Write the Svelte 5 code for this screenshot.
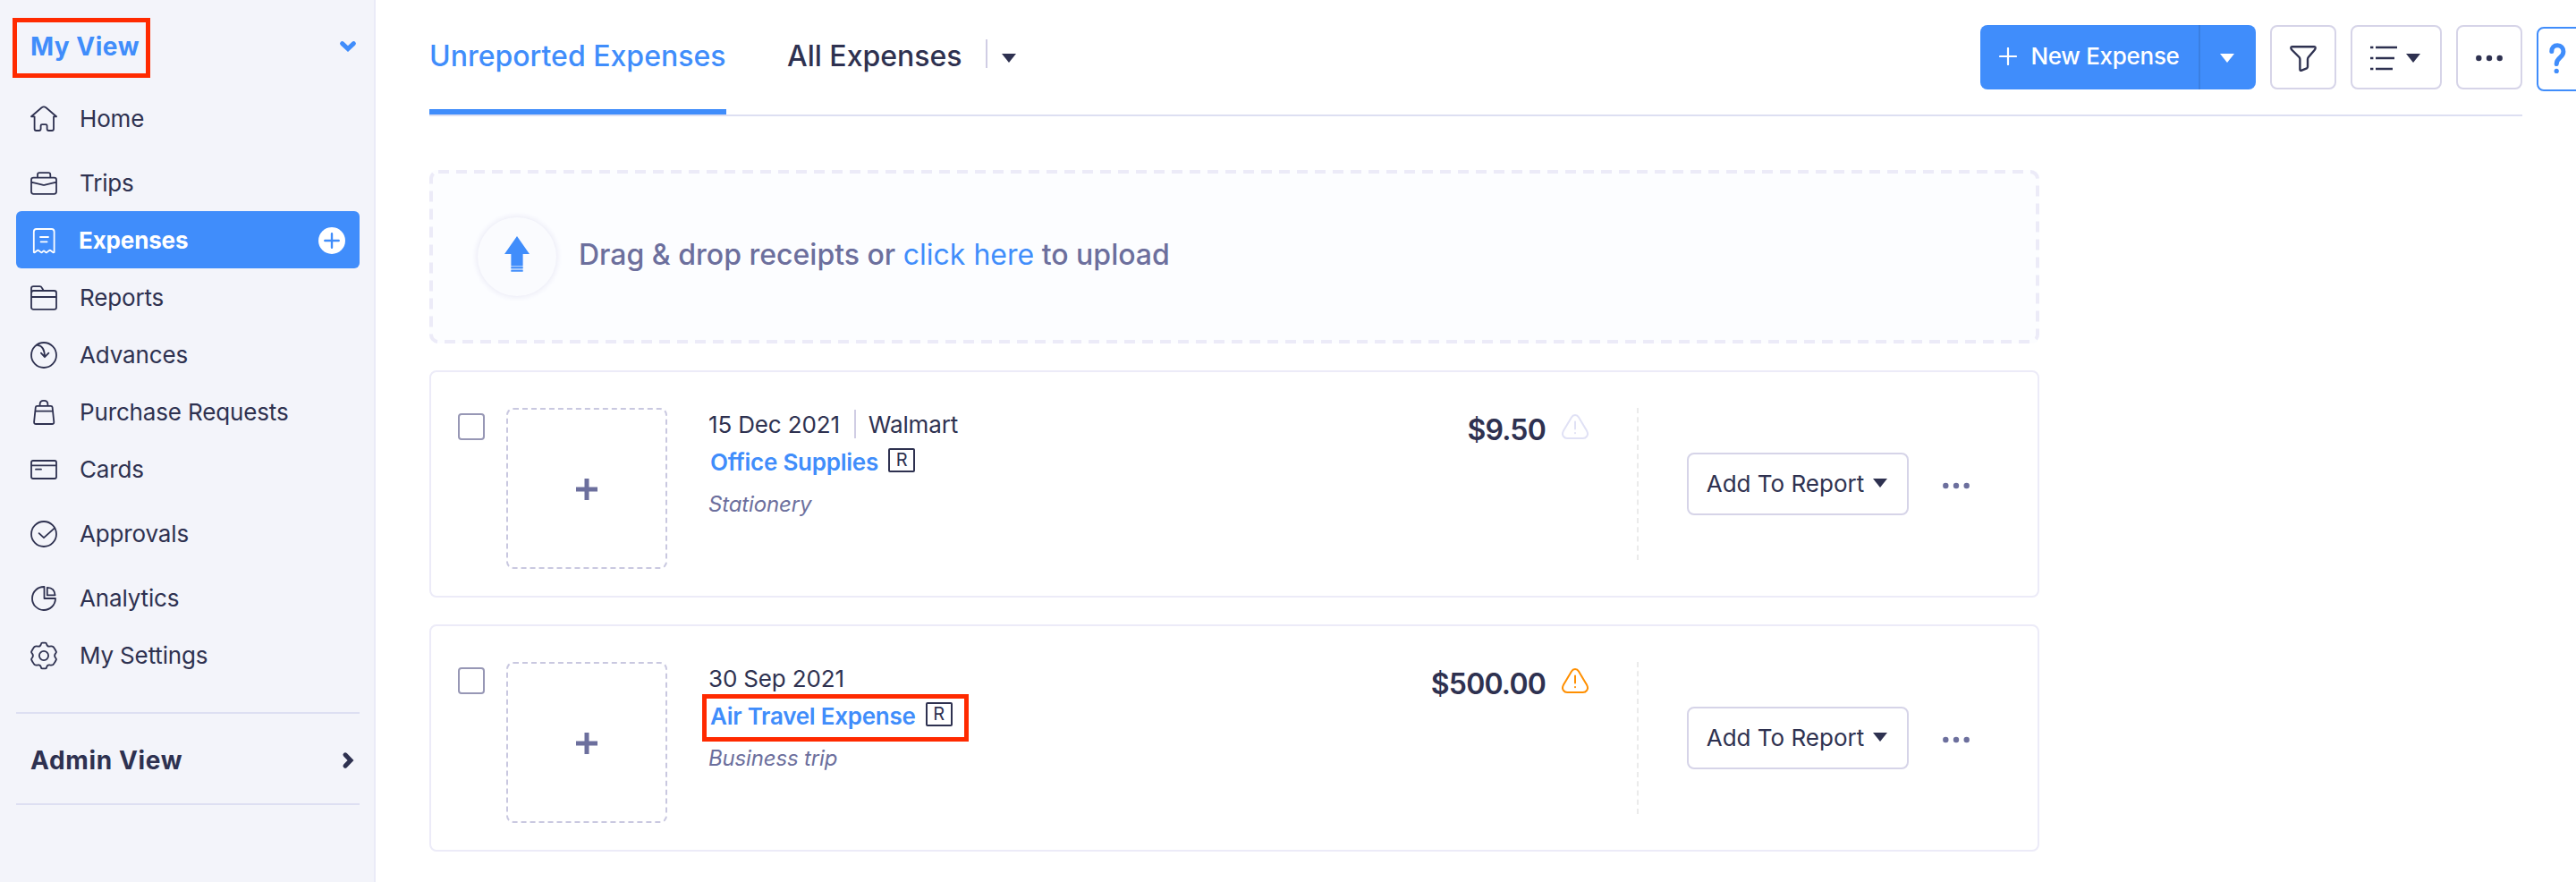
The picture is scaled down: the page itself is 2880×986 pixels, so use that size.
<script>
  const navGroups = [
    [{ label: 'Home', icon: 'M1 13.3L12.6 3.2Q15 1.5 17.4 3.2L29 13.3H26V27Q26 29 24 29H20.5Q18.6 29 18.6 27V23.5Q18.6 22.2 17 22.2H13Q11.6 22.2 11.6 23.5V27Q11.6 29 9.6 29H6.4Q4.6 29 4.6 27V13.3Z' }],
    [
      { label: 'Trips', icon: 'M8 9.5V6.5Q8 4.2 10 4.2H20.3Q22.3 4.2 22.3 6.5V9.5M3.5 9.7H26.5Q29 9.7 29 12V25.3Q29 27.8 26.5 27.8H3.5Q1 27.8 1 25.3V12Q1 9.7 3.5 9.7ZM1 14.7L13.5 17.6Q15 18 16.5 17.6L29 14.7' },
      { label: 'Expenses', active: true, icon: 'M3.8 29V6Q3.8 3 6.8 3H23.6Q26.6 3 26.6 6V29Q25.6 29.6 24.8 28.8L22.8 27.2Q21.8 26.4 20.8 27.2L18.6 28.9Q17.6 29.6 16.8 28.8L15.8 27.8Q15 27 14.2 27.8L13.2 28.8Q12.4 29.6 11.6 28.9L9.4 27.2Q8.4 26.4 7.4 27.2L5.4 28.8Q4.6 29.6 3.8 29ZM11 12H20M11.6 17.3H18.6' },
      { label: 'Reports', icon: 'M1 8V5.4Q1 3.2 3.4 3.2H10.5Q12 3.2 13 5L14.8 8H26.6Q29 8 29 10.4V26.4Q29 28.8 26.6 28.8H3.4Q1 28.8 1 26.4V8ZM1 10.4Q1 8 3.4 8H14.8M1 15H29' },
      { label: 'Advances', icon: 'M29 16A14 14 0 1 1 1 16A14 14 0 1 1 29 16ZM8 4.8C13.5 5.5 16 10.5 16 18M11.9 13.6L16 18.2L20.4 13.6' },
      { label: 'Purchase Requests', icon: 'M10.6 8.8V7Q10.6 2.9 15 2.9T19.4 7V8.8M7.6 8.8H22.8Q24.4 8.8 24.6 10.4L26.3 26.6Q26.5 29 24.2 29H6.2Q3.9 29 4.1 26.6L5.8 10.4Q6 8.8 7.6 8.8ZM5.6 14.7H24.8' },
      { label: 'Cards', icon: 'M3 6H27Q29 6 29 8V24Q29 26 27 26H3Q1 26 1 24V8Q1 6 3 6ZM1 11.4H29M6 15.7H12' }
    ],
    [{ label: 'Approvals', icon: 'M29 16A14 14 0 1 1 1 16A14 14 0 1 1 29 16ZM9.6 15.2L15 20.2L27 9.4' }],
    [
      { label: 'Analytics', icon: 'M15.5 3A13 13 0 1 0 28 16H15.5ZM18.8 3.8Q27.2 4.2 27.6 12.4H18.8Z' },
      { label: 'My Settings', icon: 'M11.9 3Q12.1 1.6 13.4 1.6H16.6Q17.9 1.6 18.1 3Q18.8 6 21.4 5.6Q24 5 25.4 6Q26.4 6.8 27.4 8.8L28.6 11Q29.4 12.4 28.2 13.4Q26 16 28.2 18.6Q29.4 19.6 28.6 21L27.4 23.2Q26.4 25.2 25.4 26Q24 27 21.4 26.4Q18.8 26 18.1 29Q17.9 30.4 16.6 30.4H13.4Q12.1 30.4 11.9 29Q11.2 26 8.6 26.4Q6 27 4.6 26Q3.6 25.2 2.6 23.2L1.4 21Q.6 19.6 1.8 18.6Q4 16 1.8 13.4Q.6 12.4 1.4 11L2.6 8.8Q3.6 6.8 4.6 6Q6 5 8.6 5.6Q11.2 6 11.9 3ZM20.1 16A5.1 5.1 0 1 1 9.9 16A5.1 5.1 0 1 1 20.1 16Z' }
    ]
  ];

  const expenses = [
    { date: '15 Dec 2021', merchant: 'Walmart', category: 'Office Supplies', note: 'Stationery', amount: '$9.50' },
    { date: '30 Sep 2021', category: 'Air Travel Expense', note: 'Business trip', amount: '$500.00', warn: true, marked: true }
  ];
</script>

{#snippet caret()}
  <svg class="caret" width="16" height="10" viewBox="0 0 16 10"><path d="M0 0H16L8 10Z" fill="currentColor" /></svg>
{/snippet}

{#snippet dots()}
  <svg width="30" height="8" viewBox="0 0 30 8" fill="currentColor">
    <circle cx="3.3" cy="4" r="3.2" /><circle cx="15" cy="4" r="3.2" /><circle cx="26.7" cy="4" r="3.2" />
  </svg>
{/snippet}

<div class="app">
  <aside class="sidebar">
    <div class="view-switch">
      <span class="view-name marked">My View</span>
      <svg width="20" height="14" viewBox="0 0 20 14" fill="none" stroke="currentColor" stroke-width="5" stroke-linecap="round"><path d="M3.6 3.6L10 9.6L16.4 3.6" /></svg>
    </div>

    <nav>
      {#each navGroups as group}
        <ul>
          {#each group as item}
            <li class:active={item.active}>
              <svg width="30" height="32" viewBox="0 0 30 32" fill="none" stroke="currentColor" stroke-width="1.8" stroke-linecap="round" stroke-linejoin="round"><path d={item.icon} /></svg>
              <span>{item.label}</span>
              {#if item.active}
                <svg class="add" width="30" height="30" viewBox="0 0 30 30">
                  <circle cx="15" cy="15" r="15" fill="#fff" />
                  <path d="M15 7.3V22.7M7.3 15H22.7" stroke="#408dfb" stroke-width="2.4" stroke-linecap="round" />
                </svg>
              {/if}
            </li>
          {/each}
        </ul>
      {/each}
    </nav>

    <div class="admin-view">
      <span>Admin View</span>
      <svg width="14" height="20" viewBox="0 0 14 20" fill="none" stroke="currentColor" stroke-width="5" stroke-linecap="round"><path d="M4 3.8L10 10L4 16.2" /></svg>
    </div>
  </aside>

  <main>
    <div class="top">
      <header>
        <div class="tabs">
          <div class="tab current">Unreported Expenses</div>
          <div class="tab">All Expenses</div>
          <div class="tab-more">{@render caret()}</div>
        </div>
        <div class="actions">
          <div class="new-expense">
            <button class="create">
              <svg width="20" height="20" viewBox="0 0 20 20" stroke="currentColor" stroke-width="2.2" stroke-linecap="round"><path d="M10 1V19M1 10H19" /></svg>
              <span>New Expense</span>
            </button>
            <button class="split" aria-label="More ways to create">{@render caret()}</button>
          </div>
          <button class="tool" aria-label="Filter">
            <svg width="30" height="30" viewBox="0 0 30 30" fill="none" stroke="currentColor" stroke-width="2.4" stroke-linejoin="round">
              <path d="M3 2.2H27Q28.8 2.2 28.6 4Q28.4 5 27.6 6L20.8 14Q20 15 20 16.2V24.4Q20 25.6 19 26.4L13.4 28.6Q11.4 29.4 11.4 27.4V16.2Q11.4 15 10.6 14L2.6 6Q1.6 4.8 1.4 4Q1.2 2.2 3 2.2Z" />
            </svg>
          </button>
          <button class="tool wide" aria-label="Layout">
            <svg width="30" height="30" viewBox="0 0 30 30" stroke="currentColor" stroke-width="2.6">
              <path d="M0 3H3.4M6 3H30M0 15H3.4M6 15H27M0 27H3.4M6 27H25" />
            </svg>
            {@render caret()}
          </button>
          <button class="tool" aria-label="More">{@render dots()}</button>
        </div>
      </header>
      <button class="help" aria-label="Help">
        <svg width="20" height="36" viewBox="0 0 20 36" fill="none" stroke="currentColor" stroke-width="5" stroke-linecap="round">
          <path d="M2.8 9.4C2.8 5.2 5.4 2.8 9.2 2.8C13.4 2.8 15.9 5.4 15.9 9.8C15.9 17 8.4 15.6 8.2 23.6" /><path d="M8.2 31.4V31.5" stroke-width="5.2" />
        </svg>
      </button>
    </div>

    <section class="dropzone">
      <svg class="outline" width="1800" height="194"><rect x="2" y="2" width="1796" height="190" rx="8" fill="none" stroke="#ecebf8" stroke-width="4" stroke-dasharray="12 8" /></svg>
      <div class="upload">
        <svg width="28" height="40" viewBox="0 0 28 40" fill="#408dfb">
          <path d="M14 0L28 20H20.6V33H7.4V20H0Z" />
          <path d="M7.4 33H20.6V40H7.4Z" opacity=".45" />
          <path d="M7.4 34.3H20.6V36H7.4ZM7.4 38H20.6V39.4H7.4Z" />
        </svg>
      </div>
      <p>Drag &amp; drop receipts or <a href="#upload">click here</a> to upload</p>
    </section>

    {#each expenses as expense}
      <article>
        <span class="checkbox"></span>
        <div class="receipt">
          <svg width="24" height="24" viewBox="0 0 24 24" stroke="currentColor" stroke-width="5"><path d="M12 0V24M0 12H24" /></svg>
        </div>
        <div class="details">
          <div class="meta">
            <span>{expense.date}</span>
            {#if expense.merchant}<span class="merchant">{expense.merchant}</span>{/if}
          </div>
          <div class="category">
            <a href="#expense" class:marked={expense.marked}>
              {expense.category}<span class="badge">R</span>
            </a>
          </div>
          <div class="note">{expense.note}</div>
        </div>
        <div class="amount">
          <span>{expense.amount}</span>
          <svg class:warn={expense.warn} width="30" height="28" viewBox="0 0 30 28" fill="none" stroke="currentColor" stroke-width="2" stroke-linecap="round">
            <path d="M11 3.4Q12.4 1 15 1T19 3.4L28 18.6Q30 22.4 28 24.9Q26.6 27 23.8 27H6.2Q3.4 27 2 24.9Q0 22.4 2 18.6Z" />
            <path d="M15 8.6V16.6M15 21V21.2" />
          </svg>
        </div>
        <svg class="divider" width="2" height="170"><path d="M1 0V170" stroke="#ebebeb" stroke-width="2" stroke-dasharray="6 4.25" /></svg>
        <button class="report"><span>Add To Report</span>{@render caret()}</button>
        <span class="more">{@render dots()}</span>
      </article>
    {/each}
  </main>
</div>

<style>
  :global(body) {
    overflow: hidden;
    background: #fff;
  }

  .app {
    display: flex;
    height: 986px;
    overflow: hidden;
    font-family: Inter, 'Liberation Sans', sans-serif;
    font-size: 26px;
    letter-spacing: -0.15px;
    color: #2e3150;
  }

  .app :global(*),
  .app :global(*::after) {
    box-sizing: border-box;
  }

  svg {
    display: block;
    flex: none;
  }

  a {
    color: #408dfb;
    text-decoration: none;
  }

  button {
    display: flex;
    align-items: center;
    justify-content: center;
    padding: 0;
    border: 2px solid #d6d4e8;
    border-radius: 8px;
    background: #fff;
    color: inherit;
    font: inherit;
    white-space: nowrap;
  }

  /* red callout frame */
  .marked {
    position: relative;
  }

  .marked::after {
    content: '';
    position: absolute;
    border: 5px solid #ff2a00;
  }

  .sidebar {
    flex: none;
    width: 420px;
    padding: 0 16px 0 18px;
    border-right: 2px solid #eaebf7;
    background: #f3f4fa;
  }

  .view-switch {
    display: flex;
    align-items: center;
    justify-content: space-between;
    height: 100px;
    padding: 5px 3px 0 16px;
    color: #408dfb;
  }

  .view-name {
    margin-bottom: 2px;
    font-size: 28px;
    font-weight: 700;
    letter-spacing: 0.5px;
    line-height: 36px;
  }

  .view-switch svg {
    margin-bottom: 1px;
  }

  .view-name.marked::after {
    left: -20px;
    top: -14px;
    width: 154px;
    height: 67px;
  }

  ul {
    margin: 0 0 8px;
    padding: 0;
    list-style: none;
  }

  li {
    display: flex;
    align-items: center;
    gap: 25px;
    height: 64px;
    padding: 0 16px;
    border-radius: 6px;
  }

  li > svg:first-child {
    margin-top: 2px;
  }

  .active {
    gap: 24px;
    background: #408dfb;
    color: #fff;
    font-weight: 700;
  }

  .add {
    margin-left: auto;
    margin-top: 2px;
  }

  .admin-view {
    display: flex;
    align-items: center;
    justify-content: space-between;
    height: 104px;
    margin-top: 32px;
    padding: 4px 6px 0 16px;
    border-top: 2px solid #dddff2;
    border-bottom: 2px solid #dddff2;
    font-size: 28px;
    font-weight: 700;
    letter-spacing: 0.65px;
  }

  main {
    flex: none;
    width: 2460px;
    padding-left: 60px;
  }

  .top {
    display: flex;
    gap: 16px;
    overflow: hidden;
  }

  header {
    display: flex;
    flex: none;
    justify-content: space-between;
    width: 2340px;
    height: 130px;
    border-bottom: 2px solid #dddff2;
  }

  .tabs {
    display: flex;
    font-size: 32px;
    font-weight: 550;
    letter-spacing: 0;
  }

  .tab {
    height: 128px;
    margin-right: 68px;
    line-height: 125px;
    white-space: nowrap;
  }

  .tab.current {
    width: 332px;
    border-bottom: 6px solid #408dfb;
    color: #408dfb;
  }

  .tab-more {
    height: 32px;
    margin: 44px 0 0 -42px;
    padding: 16px 0 0 16px;
    border-left: 2px solid #d0cde4;
  }

  .actions {
    display: flex;
    gap: 16px;
    padding-top: 28px;
  }

  .actions > * {
    height: 72px;
  }

  .new-expense {
    display: flex;
    width: 308px;
    border-radius: 8px;
    overflow: hidden;
    background: #408dfb;
    color: #fff;
    font-weight: 500;
  }

  .new-expense button {
    border: 0;
    border-radius: 0;
    background: none;
  }

  .create {
    flex: 1;
    gap: 15px;
    padding-bottom: 3px;
    letter-spacing: -0.3px;
  }

  .new-expense .split {
    width: 64px;
    padding: 2px 2px 0 0;
    border-left: 2px solid #3a7fe2;
  }

  .tool {
    width: 74px;
    padding-top: 2px;
  }

  .tool.wide {
    gap: 10px;
    width: 102px;
    padding-right: 2px;
  }

  .help {
    flex: none;
    justify-content: flex-start;
    width: 74px;
    height: 72px;
    margin-top: 30px;
    padding-left: 12px;
    border-color: #408dfb;
    color: #408dfb;
  }

  .dropzone {
    position: relative;
    display: flex;
    align-items: center;
    gap: 25px;
    width: 1800px;
    height: 194px;
    margin: 60px 0 30px;
    padding-left: 54px;
    border-radius: 8px;
    background: #fcfdff;
    color: #6c6f9d;
    font-size: 32px;
    font-weight: 500;
    letter-spacing: 0;
  }

  .dropzone a {
    font-weight: 400;
  }

  .outline {
    position: absolute;
    inset: 0;
  }

  .upload {
    display: flex;
    align-items: center;
    justify-content: center;
    width: 88px;
    height: 88px;
    border-radius: 50%;
    background: #fafbfe;
    box-shadow: 0 0 6px 1px #e9e9f5;
  }

  .upload svg {
    margin-bottom: 6px;
  }

  .dropzone p {
    margin: 0 0 5px;
  }

  article {
    display: flex;
    width: 1800px;
    height: 254px;
    margin-bottom: 30px;
    padding: 40px 76px 0 30px;
    border: 2px solid #ecebf8;
    border-radius: 8px;
  }

  .checkbox {
    width: 30px;
    height: 30px;
    margin: 6px 24px 0 0;
    border: 2px solid #9797b5;
    border-radius: 4px;
  }

  .receipt {
    display: flex;
    align-items: center;
    justify-content: center;
    width: 180px;
    height: 180px;
    padding-top: 2px;
    border: 2px dashed #c9c8e0;
    border-radius: 8px;
    color: #6c6f9d;
  }

  .details {
    flex: 1;
    padding: 2px 0 0 46px;
  }

  .meta {
    display: flex;
    height: 32px;
    line-height: 34px;
  }

  .merchant {
    margin-left: 16px;
    padding-left: 14px;
    border-left: 2px solid #d0cde4;
  }

  .category {
    margin-top: 10px;
    padding-left: 2px;
    font-weight: 600;
    letter-spacing: -0.25px;
    line-height: 34px;
  }

  .category a {
    display: inline-flex;
    gap: 11px;
  }

  .category .marked::after {
    left: -9px;
    top: -8px;
    width: 298px;
    height: 53px;
  }

  .badge {
    width: 30px;
    height: 27px;
    margin-top: 1px;
    border: 2px solid #2e3150;
    border-radius: 2px;
    color: #2e3150;
    font-size: 20px;
    font-weight: 400;
    line-height: 23px;
    text-align: center;
  }

  .note {
    margin-top: 12px;
    color: #6c6f9d;
    font-size: 24px;
    font-style: italic;
    line-height: 36px;
  }

  .amount {
    display: flex;
    gap: 18px;
    height: 48px;
    font-size: 32px;
    font-weight: 600;
    letter-spacing: -0.8px;
    line-height: 50px;
  }

  .amount svg {
    margin-top: 7px;
    color: #e0e1f5;
  }

  .amount svg.warn {
    color: #ff8f00;
  }

  .divider {
    margin: 0 54px;
  }

  .report {
    gap: 10px;
    width: 248px;
    height: 70px;
    margin-top: 50px;
    padding: 0 2px 2px 0;
    letter-spacing: 0;
  }

  .more {
    margin: 83px 0 0 38px;
    color: #6c6f9d;
  }
</style>
